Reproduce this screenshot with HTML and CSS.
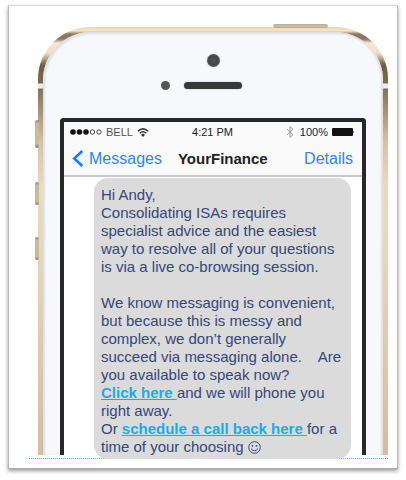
FILE: index.html
```html
<!DOCTYPE html>
<html lang="en">
<head>
  <meta charset="UTF-8">
  <meta name="viewport" content="width=device-width, initial-scale=1.0">
  <title>YourFinance messages</title>
  <link rel="stylesheet" href="styles.css">
</head>
<body>
  <main class="frame">
    <div class="phone">
      <span class="key power"></span>
      <span class="key mute"></span>
      <span class="key volume-up"></span>
      <span class="key volume-down"></span>
      <div class="face">
        <div class="top">
          <span class="camera"></span>
          <div class="earpiece">
            <span class="sensor"></span>
            <span class="speaker"></span>
            <span class="sensor-space"></span>
          </div>
        </div>

        <div class="screen">
          <header class="header">
            <div class="status">
              <div class="carrier">
                <svg class="signal" viewBox="0 0 32 6" width="32" height="6">
                  <circle cx="3" cy="3" r="2.8" fill="#111" />
                  <circle cx="9.5" cy="3" r="2.8" fill="#111" />
                  <circle cx="16" cy="3" r="2.8" fill="#111" />
                  <circle cx="22.5" cy="3" r="2.2" fill="none" stroke="#444" />
                  <circle cx="29" cy="3" r="2.2" fill="none" stroke="#444" />
                </svg>
                <span>BELL</span>
                <svg class="wifi" viewBox="0 0 12 9" width="12" height="9">
                  <path d="M0.8 3.2 Q6 -1.4 11.2 3.2" fill="none" stroke="#333" stroke-width="1.5" />
                  <path d="M2.7 5.3 Q6 2.3 9.3 5.3" fill="none" stroke="#333" stroke-width="1.5" />
                  <path d="M4 6.7 Q6 5 8 6.7 L6 9 Z" fill="#333" />
                </svg>
              </div>
              <span class="time">4:21 PM</span>
              <div class="battery">
                <svg class="bluetooth" viewBox="0 0 8 12" width="8" height="12">
                  <path d="M1 3.2 L7 8.7 L4 11.3 V0.7 L7 3.3 L1 8.8" fill="none" stroke="#999" stroke-width="1" />
                </svg>
                <span>100%</span>
                <svg viewBox="0 0 23 8" width="23" height="8">
                  <rect x="0" y="0" width="21" height="8" rx="1" fill="#111" />
                  <path d="M21.5 2.5 Q23 4 21.5 5.5 Z" fill="#111" />
                </svg>
              </div>
            </div>
            <nav class="nav">
              <a href="#" class="back">
                <svg viewBox="0 0 12 17" width="12" height="17">
                  <path d="M10.3 1 L2.3 8.5 L10.3 16" fill="none" stroke="#167efb" stroke-width="2.6" />
                </svg>
                Messages
              </a>
              <h1>YourFinance</h1>
              <a href="#" class="details">Details</a>
            </nav>
          </header>

          <div class="bubble">
            <p>Hi Andy,<br>
              Consolidating ISAs requires<br>
              specialist advice and the easiest<br>
              way to resolve all of your questions<br>
              is via a live co-browsing session.</p>
            <p>We know messaging is convenient,<br>
              but because this is messy and<br>
              complex, we don’t generally<br>
              succeed via messaging alone. &nbsp;&nbsp; Are<br>
              you available to speak now?<br>
              <a href="#">Click here </a>and we will phone you<br>
              right away.<br>
              Or <a href="#">schedule a call back here </a>for a<br>
              time of your choosing <svg class="smiley" viewBox="0 0 13 13" width="13" height="13" role="img" aria-label="smile">
                <circle cx="6.5" cy="6.5" r="5.8" fill="none" stroke="#34477c" />
                <circle cx="4.5" cy="4.8" r="0.9" fill="#34477c" />
                <circle cx="8.5" cy="4.8" r="0.9" fill="#34477c" />
                <path d="M3 7.6 Q6.5 12 10 7.6" fill="none" stroke="#34477c" />
              </svg></p>
          </div>
        </div>
      </div>
    </div>
    <div class="guide"></div>
  </main>
</body>
</html>
```

FILE: styles.css
```css
body {
  margin: 0;
  background-color: #fff;
  font-family: "Liberation Sans", Arial, sans-serif;
  color: #34477c;
}
.frame {
  margin: 5px 8px;
  padding: 21px 9px 9px 20px;
  background-color: #fff;
  border-style: solid;
  border-width: 1px;
  border-color: #ddd #b8b8b8 #aaa #bbb;
  box-shadow: 0 2px 4px rgba(0, 0, 0, 0.4);
}
.phone {
  position: relative;
  margin-left: 9px;
  padding: 5px 5px 0;
  border-radius: 52px 52px 0 0;
  background: linear-gradient(#ead5b0 0, #f7e5c8 4px, #8d7a60 7px, #8b775b 12px, #f8e8cf 16px, #f3dfc0 26px, #705c42 38px, #7d694f 56px, #eee 57px, #eee 61px, #85715a 62px, #a8937a 85px, #d8c2a4 115px, #ecd9bf 160px, #e8d4ba 240px, #d2bda3);
}
.face {
  border-radius: 48px 48px 0 0;
  background-color: #f7f8fb;
  box-shadow: inset 2px 2px 2px #dcdfe6, inset -2px 0 2px #dcdfe6;
  padding: 0 17px;
}
.key {
  position: absolute;
  background: linear-gradient(#9c8a72, #c9b99f 15%, #c9b99f 85%, #8f7c64);
  border-radius: 2px;
}
.power {
  top: -3px;
  right: 60px;
  width: 55px;
  height: 4px;
}
.mute {
  top: 93px;
  left: -3px;
  width: 4px;
  height: 28px;
}
.volume-up {
  top: 155px;
  left: -3px;
  width: 4px;
  height: 23px;
}
.volume-down {
  top: 210px;
  left: -3px;
  width: 4px;
  height: 23px;
}
.top {
  display: flex;
  flex-direction: column;
  align-items: center;
  height: 86px;
  padding-top: 22px;
  box-sizing: border-box;
}
.camera {
  width: 13px;
  height: 13px;
  border-radius: 50%;
  background: radial-gradient(#555, #444 50%, #777);
  box-shadow: 0 0 2px #bbb;
}
.earpiece {
  display: flex;
  align-items: center;
  gap: 14px;
  margin-top: 14px;
}
.sensor,
.sensor-space {
  width: 9px;
  height: 9px;
}
.sensor {
  border-radius: 50%;
  background-color: #555;
}
.speaker {
  width: 58px;
  height: 7px;
  border-radius: 4px;
  background-color: #383838;
  box-shadow: 0 0 2px #bbb;
}
.screen {
  display: flow-root;
  border: 4px solid #272727;
  border-bottom: 0;
  border-radius: 4px 4px 0 0;
  background-color: #fff;
}
.header {
  background-color: #fafafa;
  border-bottom: 2px solid #c8c8c8;
  color: #222;
}
.status {
  display: grid;
  grid-template-columns: 1fr auto 1fr;
  align-items: center;
  height: 20px;
  padding: 0 7px 0 6px;
  font-size: 11px;
}
.carrier,
.battery {
  display: flex;
  align-items: center;
  gap: 4px;
}
.carrier {
  color: #555;
}
.battery {
  justify-content: flex-end;
}
.bluetooth {
  margin-right: 2px;
}
.nav {
  display: flex;
  align-items: center;
  gap: 16px;
  height: 33px;
  padding: 0 9px 0 8px;
  font-size: 16px;
}
.nav a {
  color: #2d86fa;
  text-decoration: none;
}
.nav h1 {
  margin: 0;
  font-size: 15px;
  color: #222;
}
.nav .back {
  display: flex;
  align-items: center;
  gap: 5px;
}
.nav .details {
  margin-left: auto;
}
.bubble {
  position: relative;
  z-index: 1;
  margin: 1px 11px -4px 30px;
  padding: 8px 0 3px 7px;
  border-radius: 14px;
  background-color: #dbdbdb;
  font-size: 15px;
  line-height: 18px;
  white-space: nowrap;
}
.bubble p {
  margin: 0 0 18px;
}
.bubble p:last-child {
  margin-bottom: 0;
}
.bubble a {
  color: #12aff0;
  font-weight: bold;
}
.smiley {
  vertical-align: -2px;
}
.guide {
  margin-top: 3px;
  border-top: 1px dotted #6fa8ee;
}
```
